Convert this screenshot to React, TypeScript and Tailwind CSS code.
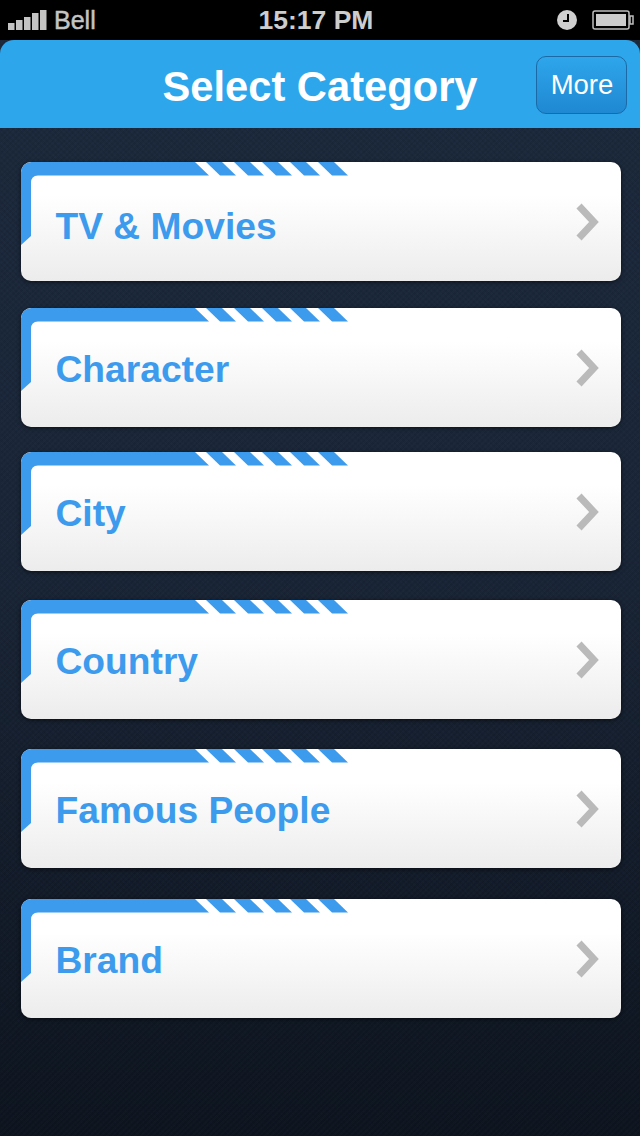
import React from 'react'

const categories = [
  { label: 'TV & Movies', gap: 'mt-0', text: 'mt-[10px]' },
  { label: 'Character', gap: 'mt-[27px]', text: 'mt-[5px]' },
  { label: 'City', gap: 'mt-[25px]', text: 'mt-[5px]' },
  { label: 'Country', gap: 'mt-[29px]', text: 'mt-[5px]' },
  { label: 'Famous People', gap: 'mt-[30px]', text: 'mt-[5px]' },
  { label: 'Brand', gap: 'mt-[31px]', text: 'mt-[5px]' },
]

function SignalIcon() {
  return (
    <svg width="40" height="22" viewBox="0 0 40 22" fill="#c4c4c4">
      <rect x="0" y="14" width="6.5" height="7" />
      <rect x="8" y="11" width="6.5" height="10" />
      <rect x="16" y="8" width="6.5" height="13" />
      <rect x="24" y="4" width="6.5" height="17" />
      <rect x="32" y="1" width="6.5" height="20" />
    </svg>
  )
}

function ClockIcon() {
  return (
    <svg width="20" height="20" viewBox="0 0 20 20">
      <circle cx="10" cy="10" r="10" fill="#cfcfcf" />
      <path d="M11 4v7H6" fill="none" stroke="#000" strokeWidth="2" />
    </svg>
  )
}

function BatteryIcon() {
  return (
    <svg width="42" height="20" viewBox="0 0 42 20">
      <rect x="1" y="1" width="36" height="18" rx="2" fill="none" stroke="#bdbdbd" strokeWidth="1.5" />
      <rect x="4" y="4" width="30" height="12" fill="#cbcbcb" />
      <rect x="38" y="6" width="3" height="8" fill="none" stroke="#bdbdbd" strokeWidth="1.5" />
    </svg>
  )
}

function CardOrnament() {
  return (
    <svg className="absolute left-0 top-0" width="330" height="84" viewBox="0 0 330 84" fill="#3d9bee">
      <path d="M0 83V10Q0 0 10 0H174L188 13.5H17Q10 13.5 10 21V74Z" />
      {[0, 1, 2, 3, 4].map((i) => (
        <path key={i} d={`M${185 + i * 28} 0h16l14 13.5h-16z`} />
      ))}
    </svg>
  )
}

function CategoryCard({ label, gap, text }: { label: string; gap: string; text: string }) {
  return (
    <div className={`${gap} relative flex h-[119px] items-center justify-between overflow-hidden rounded-[10px] bg-[linear-gradient(#ffffff_28%,#ececec_100%)] pl-[34.5px] pr-[21px] shadow-[0_1px_4px_rgba(0,0,0,0.6)]`}>
      <CardOrnament />
      <span className={`${text} text-[37.2px] font-bold leading-none text-[#3d9bee]`}>{label}</span>
      <svg width="24" height="38" viewBox="0 0 24 38" fill="none" stroke="#bababa" strokeWidth="7">
        <path d="M3 3l15 16L3 35" />
      </svg>
    </div>
  )
}

export default function App() {
  return (
    <div className="flex h-[1136px] w-[640px] flex-col overflow-hidden bg-[repeating-linear-gradient(45deg,rgba(0,0,0,0.06)_0_2px,transparent_2px_4px),repeating-linear-gradient(-45deg,rgba(255,255,255,0.01)_0_2px,transparent_2px_4px),linear-gradient(#1c293c_0%,#1a2638_45%,#0d141f_100%)] font-['Liberation_Sans',Arial,sans-serif]">
      {/* status bar */}
      <div className="grid h-[40px] grid-cols-[1fr_auto_1fr] items-center bg-black pl-[8px] pr-[6px] text-[#c4c4c4]">
        <div className="flex items-center gap-[6px]">
          <SignalIcon />
          <span className="text-[25px] leading-none [-webkit-text-stroke:0.5px_#c4c4c4]">Bell</span>
        </div>
        <span className="mr-[10px] text-[26.5px] font-bold leading-none text-[#cdcdcd]">15:17 PM</span>
        <div className="flex items-center justify-end gap-[15px]">
          <ClockIcon />
          <BatteryIcon />
        </div>
      </div>

      {/* header */}
      <div className="grid h-[88px] grid-cols-[1fr_auto_1fr] items-center rounded-t-[14px] bg-[#2ea6ec] pr-[13px]">
        <div />
        <h1 className="mt-[5px] pl-[13px] text-[41.7px] font-bold leading-none text-white">Select Category</h1>
        <button className="mt-[1px] h-[58px] w-[91px] justify-self-end rounded-[10px] border border-[#1b6aa5] bg-[linear-gradient(#2ea6ec_0%,#1f88d2_100%)] pl-[1px] text-[27.5px] leading-none text-white">
          More
        </button>
      </div>

      {/* categories */}
      <div className="flex flex-col pl-[21px] pr-[19px] pt-[34px]">
        {categories.map((c) => (
          <CategoryCard key={c.label} label={c.label} gap={c.gap} text={c.text} />
        ))}
      </div>
    </div>
  )
}
